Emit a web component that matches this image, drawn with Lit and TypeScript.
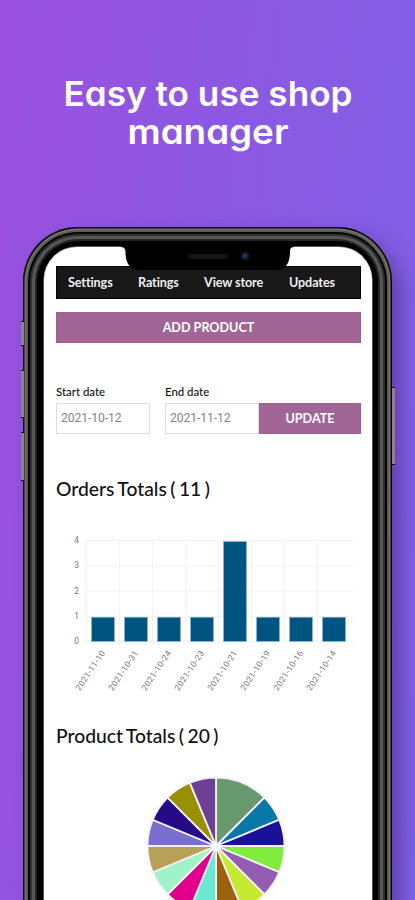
import { LitElement, html, svg, css } from "lit";
import { customElement } from "lit/decorators.js";

const ORDERS: [string, number][] = [
  ["2021-11-10", 1], ["2021-10-31", 1], ["2021-10-24", 1], ["2021-10-23", 1],
  ["2021-10-21", 4], ["2021-10-19", 1], ["2021-10-16", 1], ["2021-10-14", 1],
];
const SLICES: [string, number][] = [
  ["#68996f", 2], ["#0878a8", 1], ["#1a1199", 1], ["#80ec3d", 1], ["#925db3", 1],
  ["#c5ea30", 1], ["#9d600d", 1], ["#6ae8d1", 1], ["#e0008c", 1], ["#a0f3c6", 1],
  ["#b7a156", 1], ["#7b6ed1", 1], ["#250987", 1], ["#989000", 1], ["#6e4095", 1],
];

@customElement("orders-chart")
class OrdersChart extends LitElement {
  static styles = css`
    :host { display: block; height: 168px; }
    svg { display: block; }
    .grid { stroke: #f3f3f3; stroke-width: 1; fill: none; }
    .bar { fill: #005580; stroke: #8fb5d0; stroke-width: 0.7; }
    text { font: 8.4px Roboto, Arial, sans-serif; fill: #777; text-anchor: end; }
  `;
  render() {
    const step = 33;
    return html`<svg width="305" height="168" viewBox="56 532 305 168">
      ${[0, 1, 2, 3, 4].map((v) => svg`
        <path class="grid" d="M84 ${641.5 - v * 25.2}H354"/>
        <text x="79" y="${644 - v * 25.2}">${v}</text>`)}
      ${[0, 1, 2, 3, 4, 5, 6, 7].map((i) => svg`<path class="grid" d="M${86.5 + i * step} 540V644"/>`)}
      ${ORDERS.map(([d, v], i) => svg`
        <rect class="bar" x="${91.5 + i * step}" y="${642 - v * 25.2 + 0.4}" width="23" height="${v * 25.2 - 1}"/>
        <text transform="translate(${105.5 + i * step} 653) rotate(-56)" textLength="46">${d}</text>`)}
    </svg>`;
  }
}

@customElement("product-pie")
class ProductPie extends LitElement {
  static styles = css`
    :host { display: block; }
    svg { display: block; margin: 0 auto; }
    path { stroke: #f6f0fa; stroke-width: 1.8; }
    circle { fill: #fff; }
  `;
  render() {
    const r = 68.5;
    let used = 0;
    const pt = (n: number) => {
      const a = (n / 16) * Math.PI * 2 - Math.PI / 2;
      return `${(r * Math.cos(a)).toFixed(2)} ${(r * Math.sin(a)).toFixed(2)}`;
    };
    return html`<svg width="140" height="140" viewBox="-70 -70 140 140">
      ${SLICES.map(([c, n]) => {
        const from = pt(used);
        used += n;
        return svg`<path fill="${c}" d="M0 0L${from}A${r} ${r} 0 0 1 ${pt(used)}Z"/>`;
      })}
      <circle r="3.6"/>
    </svg>`;
  }
}

@customElement("app-root")
class AppRoot extends LitElement {
  static styles = css`
    :host {
      display: block; height: 900px; overflow: hidden; position: relative;
      background: linear-gradient(97deg, #9b51e0 0%, #8e57e1 40%, #7e62e6 100%);
      font-family: Lato, sans-serif; color: #111;
    }
    * { box-sizing: border-box; }
    .headline { display: block; width: 415px; height: 227px; }
    .headline text {
      font: 600 34px Inter, sans-serif; font-feature-settings: "cv11"; fill: #fff; text-anchor: middle;
    }
    .phone { position: relative; width: 369px; height: 760px; margin-left: 23px; }
    .body {
      height: 100%; border-radius: 55px; padding: 20px 20px 0 21px; background: #000;
      box-shadow: inset 0 0 0 1.5px #080808, inset 0 0 0 3px #77736f, inset 0 0 0 5px #5d5b59,
        inset 0 0 0 7px #050505, inset 0 0 0 9px #303030, inset 0 0 0 12px #555655,
        inset 0 0 0 14px #242424, 9px 10px 20px rgba(60, 35, 120, 0.5);
    }
    .screen {
      height: 740px; background: #fff; border-radius: 33px 33px 0 0;
      padding: 19px 11px 0 12px; box-shadow: 0 0 0 0.7px #777;
    }
    .key { position: absolute; width: 3px; background: #8b8490; border: solid #111; border-width: 1px 0; }
    .k1 { left: -2px; top: 94px; height: 25px; }
    .k2 { left: -2px; top: 143px; height: 48px; }
    .k3 { left: -2px; top: 205px; height: 49px; }
    .k4 { right: -3px; top: 160px; height: 78px; }
    .notch { position: absolute; left: 97px; top: 18px; width: 174px; height: 26px; }
    nav {
      display: flex; height: 33px; align-items: center; background: #181818; color: #eee;
      padding-left: 11px; font-size: 12.6px; font-weight: 700; letter-spacing: -0.1px;
      border: 1px solid #050505;
    }
    nav span { white-space: nowrap; }
    nav span:nth-child(1) { width: 70px; }
    nav span:nth-child(2) { width: 66px; }
    nav span:nth-child(3) { width: 85px; }
    .btn {
      display: flex; align-items: center; justify-content: center; background: #a16696;
      color: #fff; font-weight: 700; font-size: 12.6px; border: 1px solid #9a628f;
    }
    .add { height: 31px; margin-top: 13px; }
    .dates { display: flex; margin-top: 41px; align-items: flex-end; }
    label { display: block; font-size: 11.4px; font-weight: 500; height: 19px; line-height: 15px; }
    .field {
      height: 31px; border: 1px solid #dedede; color: #858585; font: 12.2px/28px Roboto, sans-serif;
      padding-left: 4px; letter-spacing: -0.1px;
    }
    .start { width: 94px; margin-right: 15px; }
    .end { width: 94px; }
    .update { flex: 1; height: 31px; }
    h2 {
      margin: 0; font-size: 19.3px; font-weight: 500; line-height: 24px; white-space: nowrap;
      letter-spacing: 0; word-spacing: -1.4px;
    }
    .orders { margin-top: 43px; height: 55px; }
    .products { margin-top: 24px; height: 52px; }
    product-pie { padding-left: 14px; }
  `;
  render() {
    return html`
      <svg class="headline">
        <text x="208" y="106" textLength="289" lengthAdjust="spacingAndGlyphs">Easy to use shop</text>
        <text x="208" y="143.500" textLength="161" lengthAdjust="spacingAndGlyphs">manager</text>
      </svg>
      <div class="phone">
        <i class="key k1"></i><i class="key k2"></i><i class="key k3"></i><i class="key k4"></i>
        <div class="body">
          <div class="screen">
            <nav><span>Settings</span><span>Ratings</span><span>View store</span><span>Updates</span></nav>
            <div class="btn add">ADD PRODUCT</div>
            <div class="dates">
              <div class="start"><label>Start date</label><div class="field">2021-10-12</div></div>
              <div class="end"><label>End date</label><div class="field">2021-11-12</div></div>
              <div class="btn update">UPDATE</div>
            </div>
            <h2 class="orders">Orders Totals ( 11 )</h2>
            <orders-chart></orders-chart>
            <h2 class="products">Product Totals ( 20 )</h2>
            <product-pie></product-pie>
          </div>
        </div>
        <svg class="notch" viewBox="120 245 174 26">
          <path d="M120 245H294V247Q290 247 290 251V253Q289 270 277 270H140Q126 270 125.500 253V251Q125 247 121 247Z"/>
          <rect x="188" y="254" width="40" height="5" rx="2.500" fill="#151515"/>
          <circle cx="245" cy="256" r="4.500" fill="#111827"/>
          <circle cx="245" cy="256" r="2" fill="#173c76"/>
        </svg>
      </div>
    `;
  }
}
